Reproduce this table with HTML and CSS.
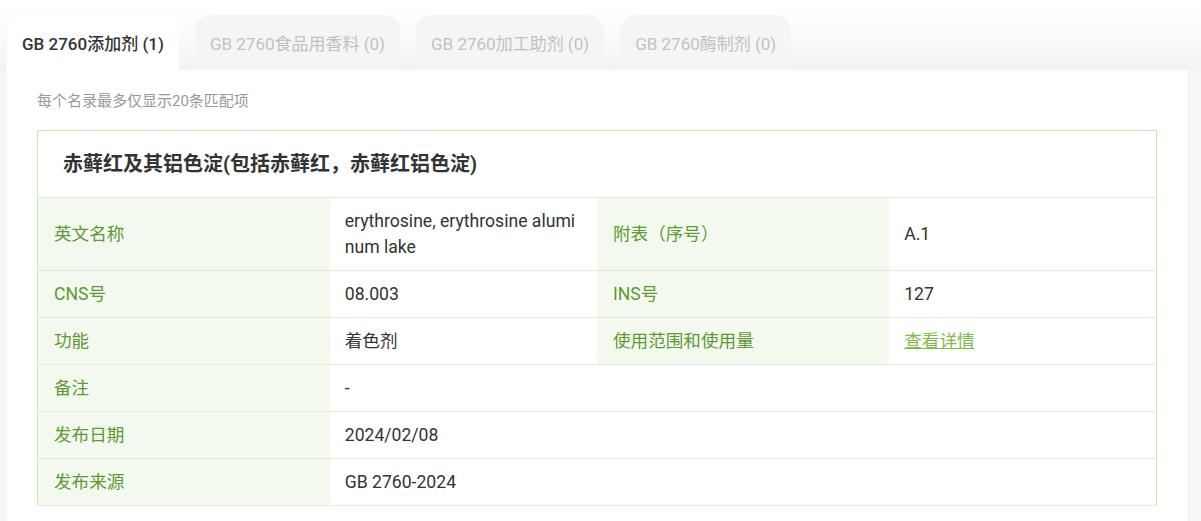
FILE: index.html
```html
<!DOCTYPE html>
<html lang="zh-CN">
<head>
<meta charset="utf-8">
<title>GB 2760</title>
<link rel="stylesheet" href="styles.css">
</head>
<body>
<div class="page">
  <div class="tabs">
    <div class="tab active">GB 2760添加剂 (1)</div>
    <div class="tab">GB 2760食品用香料 (0)</div>
    <div class="tab">GB 2760加工助剂 (0)</div>
    <div class="tab">GB 2760酶制剂 (0)</div>
  </div>
  <div class="card">
    <p class="note">每个名录最多仅显示20条匹配项</p>
    <table class="info">
      <colgroup>
        <col class="c-label"><col class="c-value"><col class="c-label"><col class="c-value">
      </colgroup>
      <thead>
        <tr><th colspan="4" class="title">赤藓红及其铝色淀(包括赤藓红，赤藓红铝色淀)</th></tr>
      </thead>
      <tbody>
        <tr>
          <td class="label">英文名称</td>
          <td class="value">erythrosine, erythrosine aluminum lake</td>
          <td class="label">附表（序号）</td>
          <td class="value">A.1</td>
        </tr>
        <tr>
          <td class="label">CNS号</td>
          <td class="value">08.003</td>
          <td class="label">INS号</td>
          <td class="value">127</td>
        </tr>
        <tr>
          <td class="label">功能</td>
          <td class="value">着色剂</td>
          <td class="label">使用范围和使用量</td>
          <td class="value"><a class="link" href="#">查看详情</a></td>
        </tr>
        <tr>
          <td class="label">备注</td>
          <td class="value" colspan="3">-</td>
        </tr>
        <tr>
          <td class="label">发布日期</td>
          <td class="value" colspan="3">2024/02/08</td>
        </tr>
        <tr>
          <td class="label">发布来源</td>
          <td class="value" colspan="3">GB 2760-2024</td>
        </tr>
      </tbody>
    </table>
  </div>
</div>
</body>
</html>
```

FILE: styles.css
```css
* { box-sizing: border-box; }

html, body {
  margin: 0;
  padding: 0;
}

body {
  font-family: Roboto, "Noto Sans CJK SC", sans-serif;
  color: #333;
  background: linear-gradient(to bottom, #ffffff 0, #fcfcfc 30px, #f3f3f3 70px, #f6f6f6 72px, #f6f6f6 100%);
  min-height: 521px;
}

.page {
  padding: 15px 14px 0 7px;
}

.tabs {
  display: flex;
  gap: 16px;
  height: 55px;
}

.tab {
  display: flex;
  align-items: center;
  padding: 0 15px;
  border-radius: 16px 16px 0 0;
  background: #f5f5f5;
  color: #c2c2c2;
  font-size: 17px;
  white-space: nowrap;
}

.tab.active {
  background: #fff;
  color: #333;
  font-weight: 500;
}

.card {
  background: #fff;
  padding: 21px 30px 20px 30px;
  min-height: 460px;
}

.note {
  margin: 0 0 19px 0;
  font-size: 15px;
  line-height: 20px;
  color: #999;
}

.info {
  width: 1120px;
  border-collapse: collapse;
  table-layout: fixed;
  border: 1px solid #c9e9ab;
  font-size: 17.6px;
  line-height: 26px;
}

.c-label { width: 292px; }
.c-value { width: 267px; }

.info td, .info th {
  border-bottom: 1px solid #e2efd8;
  text-align: left;
  vertical-align: middle;
}

.title {
  padding: 20px 25px;
  font-size: 20px;
  font-weight: 700;
  color: #333;
  border-bottom: 1px solid #e2efd8;
}

.label {
  background: #f4f9ef;
  color: #5c9a33;
  padding: 10px 16px;
}

.value {
  background: #fff;
  color: #333;
  padding: 10px 15px;
  word-break: break-all;
}

.link {
  color: #7bbd47;
  text-decoration: underline;
}
```
